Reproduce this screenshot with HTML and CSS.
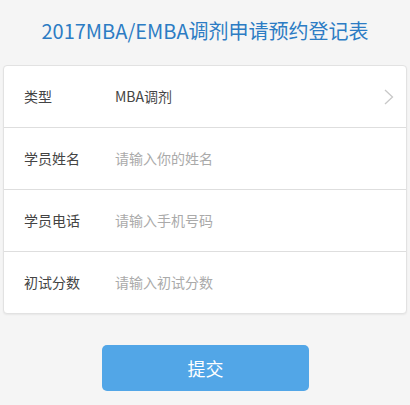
FILE: index.html
```html
<!DOCTYPE html>
<html lang="zh">
<head>
<meta charset="utf-8">
<link rel="stylesheet" href="styles.css">
</head>
<body>
<div class="page">
  <h1 class="title">2017MBA/EMBA调剂申请预约登记表</h1>
  <div class="card">
    <div class="row">
      <span class="label">类型</span>
      <span class="value">MBA调剂</span>
      <svg class="chev" width="10" height="16" viewBox="0 0 10 16"><path d="M1 1 L8.5 8 L1 15" fill="none" stroke="#c8c8c8" stroke-width="1.3"/></svg>
    </div>
    <div class="row">
      <span class="label">学员姓名</span>
      <span class="value ph">请输入你的姓名</span>
    </div>
    <div class="row">
      <span class="label">学员电话</span>
      <span class="value ph">请输入手机号码</span>
    </div>
    <div class="row">
      <span class="label">初试分数</span>
      <span class="value ph">请输入初试分数</span>
    </div>
  </div>
  <div class="actions">
    <button class="submit">提交</button>
  </div>
</div>
</body>
</html>
```

FILE: styles.css
```css
html, body {
  margin: 0;
  padding: 0;
  background: #f5f5f5;
}
body {
  font-family: "Noto Sans CJK SC", "Noto Sans", sans-serif;
  width: 410px;
  height: 405px;
  overflow: hidden;
}
.page {
  display: flex;
  flex-direction: column;
}
.title {
  margin: 0;
  height: 65px;
  line-height: 62px;
  text-align: center;
  font-size: 20px;
  font-weight: normal;
  color: #2c7cc4;
}
.card {
  margin: 0 3px;
  background: #fff;
  border: 1px solid #e2e2e2;
  border-radius: 4px;
  box-shadow: 0 1px 2px rgba(0,0,0,0.06);
}
.row {
  height: 61px;
  display: flex;
  align-items: center;
  border-top: 1px solid #dedede;
  padding-left: 20px;
  padding-right: 12px;
  padding-bottom: 2px;
  box-sizing: border-box;
  font-size: 14px;
}
.row:first-child {
  height: 61px;
}
.row + .row {
  height: 62px;
}
.row:first-child {
  border-top: none;
}
.label {
  width: 91px;
  color: #444;
}
.value {
  flex: 1;
  color: #444;
}
.value.ph {
  color: #aaa;
}
.chev {
  display: block;
  margin-top: 2px;
}
.actions {
  display: flex;
  justify-content: center;
  padding-top: 31px;
}
.submit {
  width: 207px;
  height: 46px;
  border: none;
  border-radius: 5px;
  background: #52a6e7;
  color: #fff;
  font-family: "Noto Sans CJK SC", sans-serif;
  font-size: 18px;
  margin-left: 1px;
}
```
